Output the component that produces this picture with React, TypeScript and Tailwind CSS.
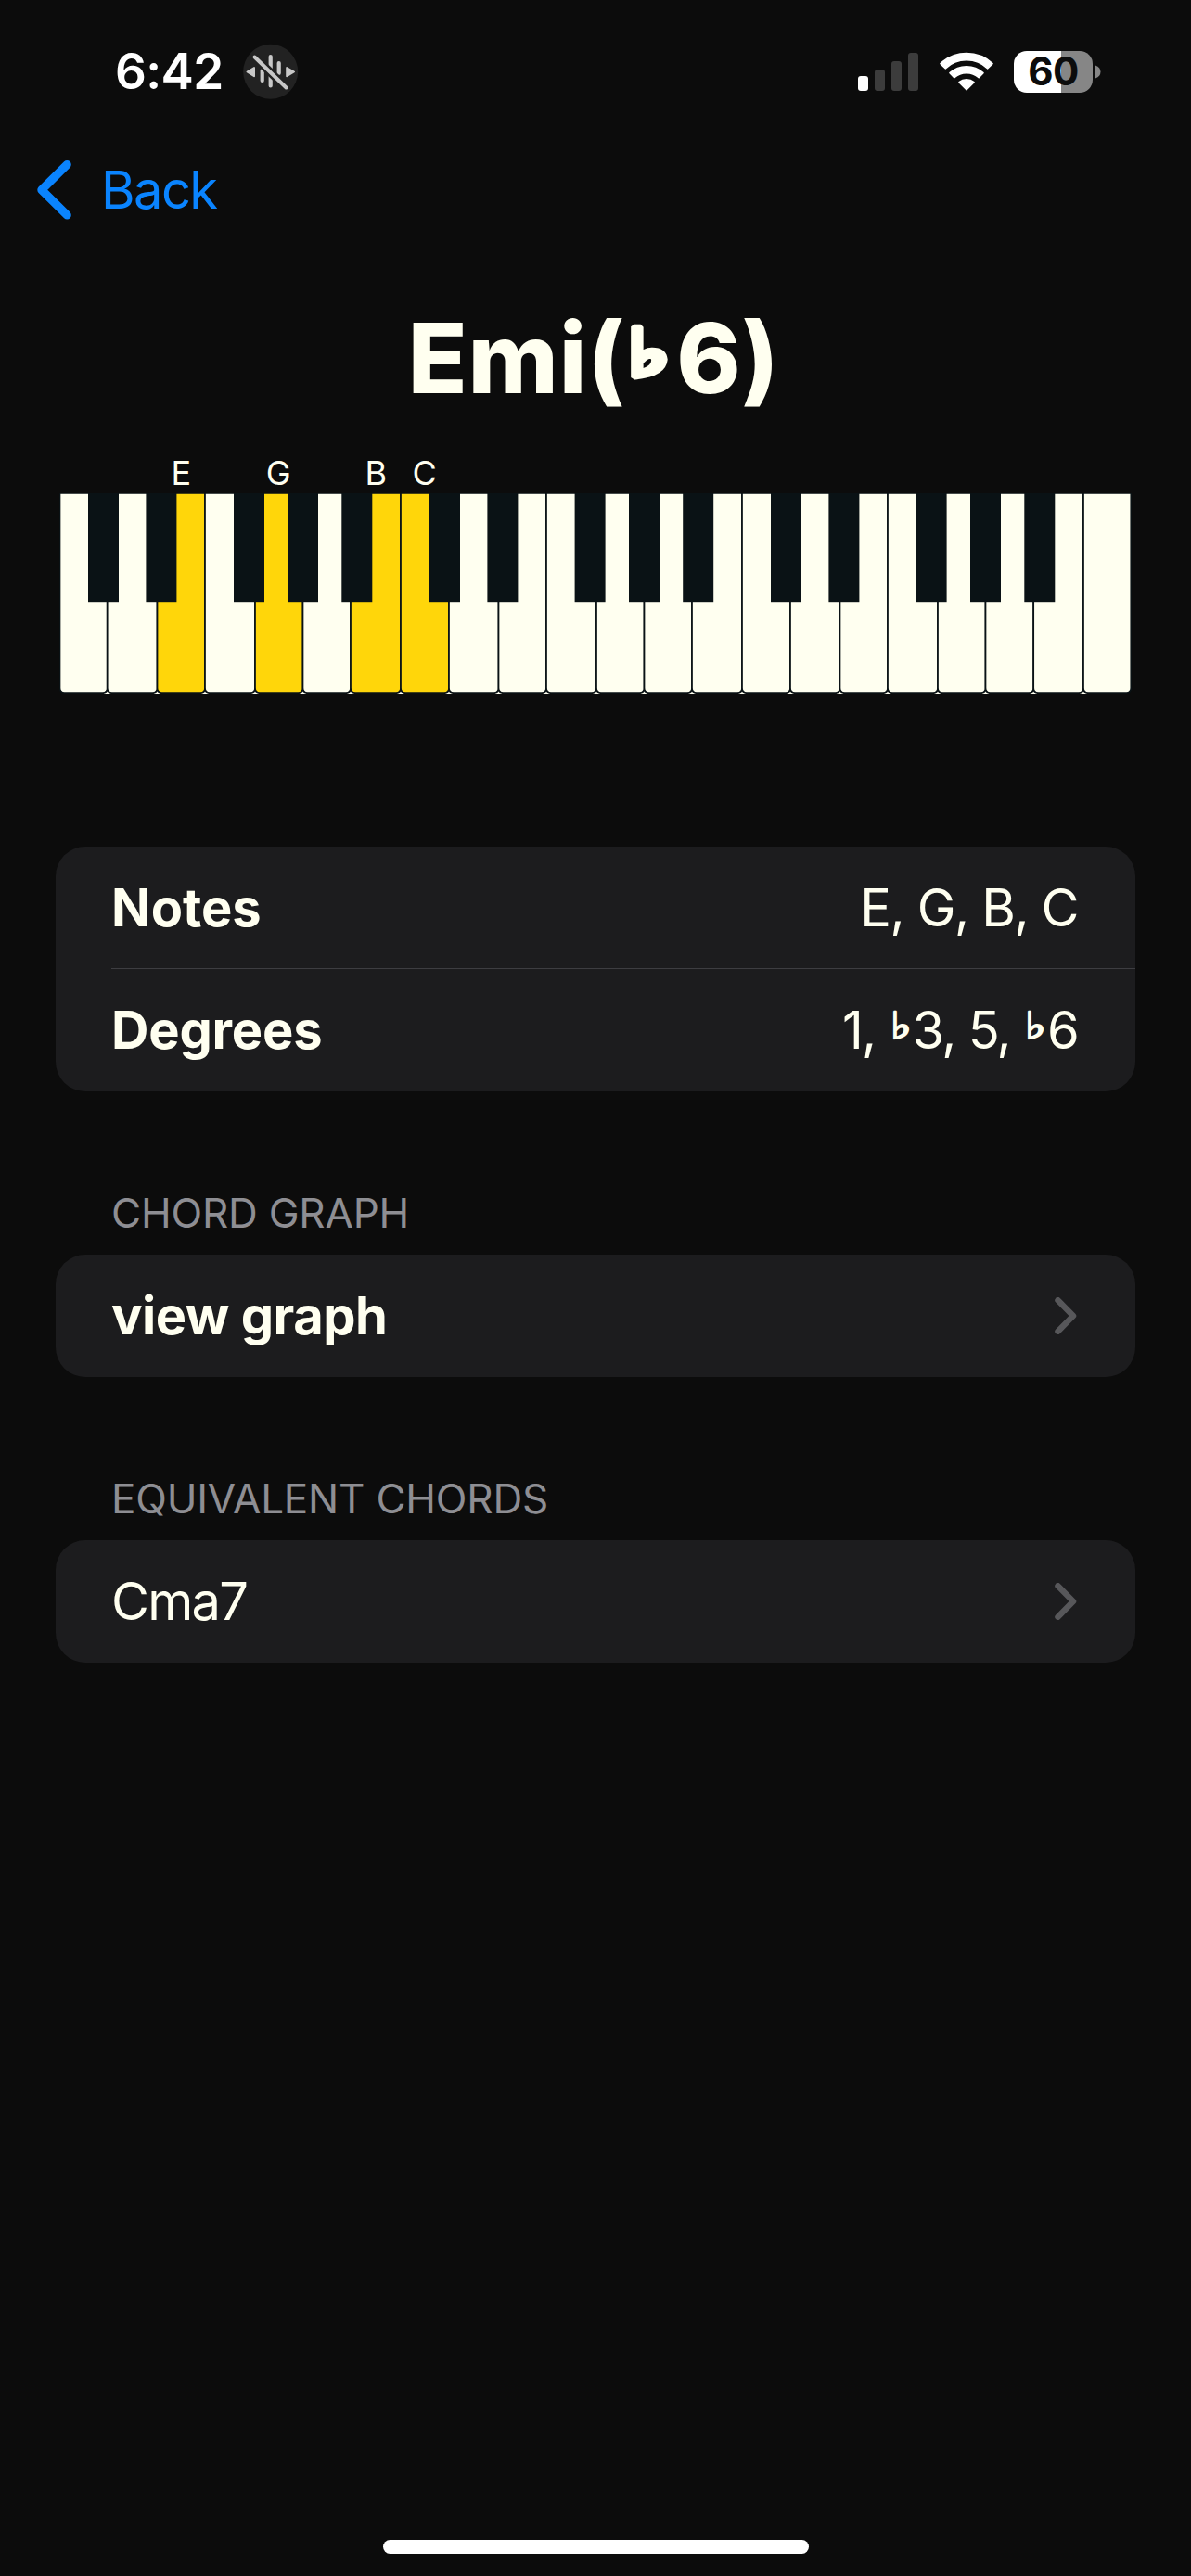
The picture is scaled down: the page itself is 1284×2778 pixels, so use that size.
import React from "react";

const INTER = "font-['Inter',sans-serif]";

function Flat({ large = false }: { large?: boolean }) {
  return large ? (
    <span className="relative -top-[19px] -left-[2px] inline-block w-[55px] scale-x-[1.35] text-center align-baseline font-['DejaVu_Sans',sans-serif] text-[70px] leading-none font-normal tracking-normal [-webkit-text-stroke:8px_#fffff0]">♭</span>
  ) : (
    <span className="relative -top-[11px] inline-block w-[26px] scale-x-[1.2] text-center align-baseline font-['DejaVu_Sans',sans-serif] text-[40px] leading-none font-normal tracking-normal [-webkit-text-stroke:2px_#fffff0]">♭</span>
  );
}

function FocusIcon() {
  return (
    <svg className="h-[60px] w-[60px]" viewBox="0 0 60 60">
      <circle cx="29.7" cy="30.3" r="29.5" fill="#222222" />
      <g stroke="#c8c8c8" strokeWidth="4.2" strokeLinecap="round" fill="none">
        <path d="M20.7 29V40M29.7 14V45.5M38.7 21V32" />
      </g>
      <path d="M12.5 14.5L46.5 47.5" stroke="#222222" strokeWidth="9" />
      <path d="M12.5 14.5L46.5 47.5" stroke="#c8c8c8" strokeWidth="4" strokeLinecap="round" />
      <g fill="#c8c8c8" stroke="#c8c8c8" strokeWidth="2" strokeLinejoin="round">
        <path d="M4.5 30.5L12 26V35.2Z" />
        <path d="M55 30.5L47.2 26V35.2Z" />
      </g>
    </svg>
  );
}

function Signal() {
  return (
    <div className="flex h-[41px] items-end gap-[7px]">
      <div className="h-4 w-[11px] rounded-[3px] bg-white" />
      <div className="h-[23px] w-[11px] rounded-[3px] bg-[#3c3c3c]" />
      <div className="h-8 w-[11px] rounded-[3px] bg-[#3c3c3c]" />
      <div className="h-[41px] w-[11px] rounded-[3px] bg-[#3c3c3c]" />
    </div>
  );
}

function Wifi() {
  return (
    <svg className="h-[42px] w-[58px]" viewBox="0 0 58 42" fill="#ffffff" stroke="#ffffff" strokeWidth="1.6" strokeLinejoin="round">
      <path d="M1 12.6A41.2 41.2 0 0 1 57 12.6L51.8 17.8A33.3 33.3 0 0 0 6.2 17.8Z" />
      <path d="M11 22.6A26.9 26.9 0 0 1 47 22.6L42.2 27.6A20.1 20.1 0 0 0 15.8 27.6Z" />
      <path d="M21 32.7A12.5 12.5 0 0 1 37 32.7L29 40.8Z" />
    </svg>
  );
}

function Battery() {
  return (
    <div className="flex items-center gap-[3px]">
      <div className="flex h-[45px] w-[85px] items-center justify-center rounded-[14px] bg-[linear-gradient(90deg,#ffffff_60%,#868686_60%)]">
        <span className="text-[42px] leading-none font-bold tracking-[-0.5px] text-[#0c0c0c]">60</span>
      </div>
      <svg className="h-[15px] w-[6px]" viewBox="0 0 6 15">
        <path d="M0 0.5Q5.5 2.5 5.5 7.5T0 14.5Z" fill="#868686" />
      </svg>
    </div>
  );
}

const edges = [64.5, 115.7, 169.5, 221, 275, 326.5, 378, 432, 484, 537.5, 589, 643, 694.5, 746, 800, 852, 905.5, 957, 1011, 1062.5, 1114.2, 1168, 1219.3];
const blacks = [95, 157.4, 252, 310, 368.3, 463, 525.4, 619.6, 678, 736.2, 831, 893.4, 987.6, 1046, 1104.3];
const pressed = [2, 4, 6, 7];

function Keyboard() {
  return (
    <svg className="h-[216px] w-[1156px]" viewBox="64 532 1156 216">
      {edges.slice(1, -1).map((x) => (
        <path key={x} d={`M${x - 4} 748L${x} 744L${x + 4} 748Z`} fill="#fffff0" />
      ))}
      {edges.slice(0, -1).map((x, i) => {
        const r = edges[i + 1];
        return (
          <path
            key={x}
            d={`M${x} 532H${r}V742Q${r} 747 ${r - 5} 747H${x + 5}Q${x} 747 ${x} 742Z`}
            fill={pressed.includes(i) ? "#ffd60a" : "#fffff0"}
            stroke="#0a1215"
            strokeWidth="1.7"
          />
        );
      })}
      {blacks.map((x) => (
        <rect key={x} x={x} y="532" width="33" height="117.2" fill="#0a1215" />
      ))}
    </svg>
  );
}

function Chevron() {
  return (
    <svg className="mr-[3px] h-10 w-6" viewBox="0 0 24 40" fill="none" stroke="#57575a" strokeWidth="6.5" strokeLinecap="round" strokeLinejoin="round">
      <path d="M3.5 3.2L20 20L3.5 36.8" />
    </svg>
  );
}

function Row({ label, children }: { label: React.ReactNode; children: React.ReactNode }) {
  return (
    <div className="flex h-[132px] items-center justify-between pr-[60px] pl-[60px] text-[56px] leading-[132px]">
      {label}
      {children}
    </div>
  );
}

export default function App() {
  return (
    <div className={`flex h-[2778px] w-[1284px] flex-col overflow-hidden bg-[#0c0c0c] whitespace-nowrap text-[#fffff0] ${INTER}`}>
      <header className="flex h-[154px] items-center justify-between pr-[97px] pl-[124px] text-white">
        <div className="flex items-center gap-[21px]">
          <span className="w-[117px] text-[53px] leading-[60px] font-semibold tracking-[-0.6px]">6:42</span>
          <FocusIcon />
        </div>
        <div className="flex items-center gap-[22px]">
          <div className="mr-px">
            <Signal />
          </div>
          <Wifi />
          <Battery />
        </div>
      </header>

      <nav className="flex h-[102px] items-center gap-[31px] pl-[39px] text-[#0a84ff]">
        <svg className="h-[66px] w-[39px]" viewBox="0 0 39 66" fill="none" stroke="currentColor" strokeWidth="9" strokeLinecap="round" strokeLinejoin="round">
          <path d="M33.3 5.5L5.8 32.8L33.3 60" />
        </svg>
        <span className="text-[56px] leading-[66px] tracking-[-1.6px]">Back</span>
      </nav>

      <h1 className="mt-[64px] mr-[4px] flex h-[132px] items-baseline justify-center text-[105px] leading-[132px] font-extrabold tracking-[0.8px] [font-feature-settings:'calt'_0]">
        <span className="leading-[132px]">
          Emi(<Flat large />6)
        </span>
      </h1>

      <div className="mt-[37px] grid h-[43px] grid-cols-[repeat(22,52.5px)] pl-[64px] text-center text-[36px] leading-[43px]">
        <span className="col-start-3">E</span>
        <span className="col-start-5">G</span>
        <span className="col-start-7">B</span>
        <span className="col-start-8">C</span>
      </div>
      <div className="flex pl-16">
        <Keyboard />
      </div>

      <main className="mx-[60px] mt-[165px] flex flex-col">
        <section className="rounded-[32px] bg-[#1c1c1e]">
          <Row label={<b>Notes</b>}>
            <span className="mr-[2px] tracking-[-1.4px]">E, G, B, C</span>
          </Row>
          <div className="-mt-px ml-[60px] h-px bg-[#3d3d41]" />
          <Row label={<b className="tracking-[-0.2px]">Degrees</b>}>
            <span className="mr-[2px] tracking-[-1.7px]">
              1, <Flat />3, 5, <Flat />6
            </span>
          </Row>
        </section>

        <h2 className="mt-[101px] ml-[60px] h-[60px] text-[44px] leading-[60px] tracking-[-0.2px] text-[#8e8e93]">CHORD GRAPH</h2>
        <section className="mt-[15px] rounded-[32px] bg-[#1c1c1e]">
          <Row label={<b className="tracking-[-0.5px]">view graph</b>}>
            <Chevron />
          </Row>
        </section>

        <h2 className="mt-[101px] ml-[60px] h-[60px] text-[44px] leading-[60px] tracking-[-0.2px] text-[#8e8e93]">EQUIVALENT CHORDS</h2>
        <section className="mt-[15px] rounded-[32px] bg-[#1c1c1e]">
          <Row label={<span className="tracking-[-1.7px]">Cma7</span>}>
            <Chevron />
          </Row>
        </section>
      </main>

      <div className="mt-auto mb-6 ml-[413px] h-[15px] w-[459px] rounded-full bg-white" />
    </div>
  );
}
